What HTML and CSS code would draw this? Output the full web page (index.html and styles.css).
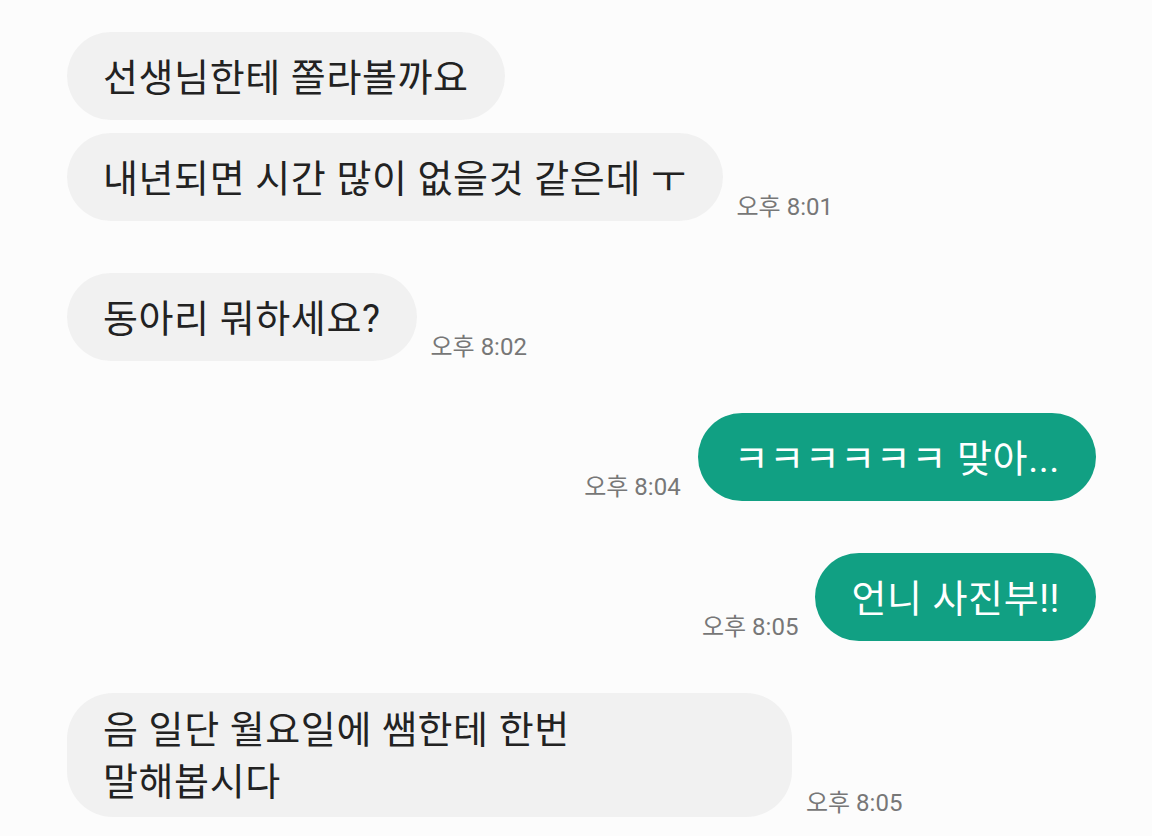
FILE: index.html
```html
<!DOCTYPE html>
<html lang="ko">
<head>
<meta charset="utf-8">
<title>Chat</title>
<link rel="stylesheet" href="styles.css">
</head>
<body>
<div class="chat">
  <div class="group">
    <div class="row in">
      <div class="bubble recv">선생님한테 쫄라볼까요</div>
    </div>
    <div class="row in">
      <div class="bubble recv">내년되면 시간 많이 없을것 같은데 ㅜ</div>
      <span class="time">오후 8:01</span>
    </div>
  </div>
  <div class="group">
    <div class="row in">
      <div class="bubble recv">동아리 뭐하세요?</div>
      <span class="time">오후 8:02</span>
    </div>
  </div>
  <div class="group">
    <div class="row out">
      <span class="time">오후 8:04</span>
      <div class="bubble sent">ㅋㅋㅋㅋㅋㅋ 맞아...</div>
    </div>
  </div>
  <div class="group">
    <div class="row out">
      <span class="time">오후 8:05</span>
      <div class="bubble sent">언니 사진부!!</div>
    </div>
  </div>
  <div class="group">
    <div class="row in">
      <div class="bubble recv full">음 일단 월요일에 쌤한테 한번<br>말해봅시다</div>
      <span class="time">오후 8:05</span>
    </div>
  </div>
</div>
</body>
</html>
```

FILE: styles.css
```css
html, body {
  margin: 0;
  padding: 0;
  background: #fcfcfc;
}

body {
  width: 1152px;
  height: 836px;
  overflow: hidden;
  font-family: Roboto, "Noto Sans CJK KR", sans-serif;
}

.chat {
  display: flex;
  flex-direction: column;
  gap: 52px;
  padding: 32px 56px 0 67px;
}

.group {
  display: flex;
  flex-direction: column;
  gap: 13px;
}

.row {
  display: flex;
  align-items: flex-end;
}

.row.in {
  justify-content: flex-start;
  gap: 14px;
}

.row.out {
  justify-content: flex-end;
  gap: 17px;
}

.bubble {
  box-sizing: border-box;
  max-width: 725px;
  height: 88px;
  padding: 3px 36px 0;
  border-radius: 44px;
  font-size: 38px;
  line-height: 52px;
  letter-spacing: 0.6px;
  display: flex;
  align-items: center;
  white-space: nowrap;
}

.bubble.recv {
  background: #f1f1f1;
  color: #222222;
}

.bubble.sent {
  background: #11a083;
  color: #ffffff;
}

.bubble.full {
  display: block;
  width: 725px;
  height: auto;
  padding: 11px 36px 9px;
  border-radius: 46px;
}

.time {
  font-size: 24px;
  line-height: 24px;
  color: #777777;
  margin-bottom: 2px;
  white-space: nowrap;
}
```
